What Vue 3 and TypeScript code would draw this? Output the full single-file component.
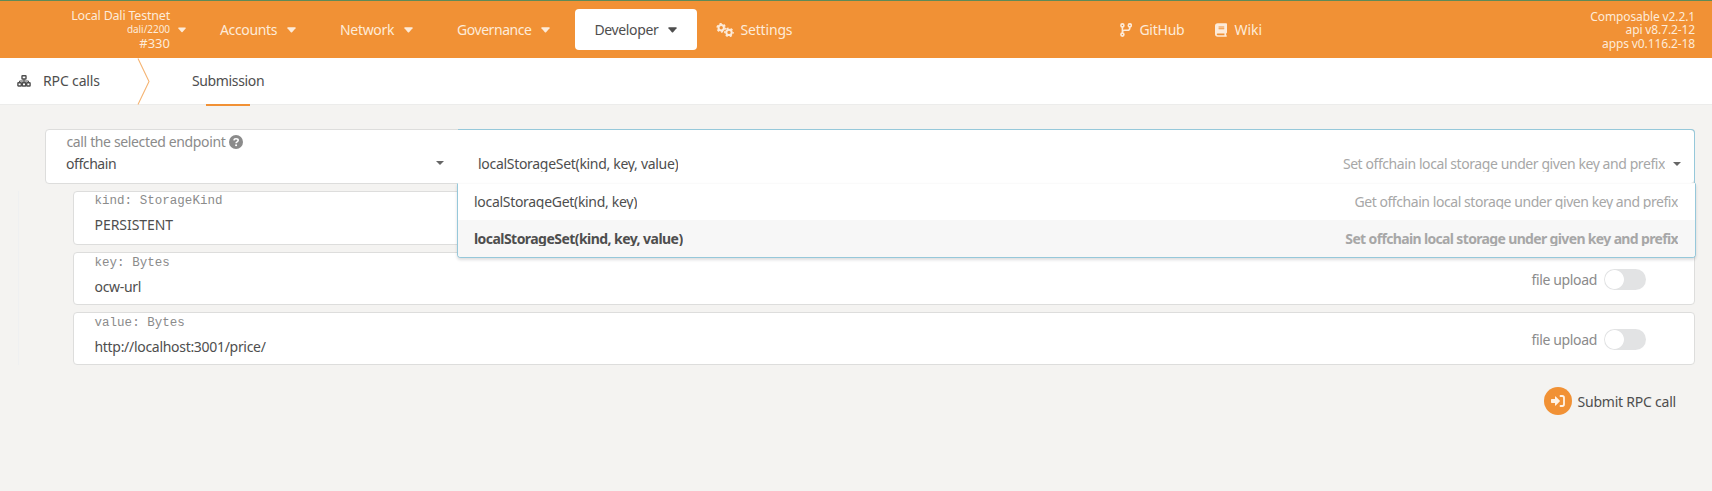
<script setup lang="ts">
interface NavItem { label: string; name: string; active?: boolean }
interface Option { label: string; hint: string; selected?: boolean }
interface Param { label: string; value: string; upload: boolean }

const nav: NavItem[] = [
  { label: 'Accounts', name: 'accounts' },
  { label: 'Network', name: 'network' },
  { label: 'Governance', name: 'governance' },
  { label: 'Developer', name: 'developer', active: true },
]
const options: Option[] = [
  { label: 'localStorageGet(kind, key)', hint: 'Get offchain local storage under given key and prefix' },
  { label: 'localStorageSet(kind, key, value)', hint: 'Set offchain local storage under given key and prefix', selected: true },
]
const params: Param[] = [
  { label: 'kind: StorageKind', value: 'PERSISTENT', upload: false },
  { label: 'key: Bytes', value: 'ocw-url', upload: true },
  { label: 'value: Bytes', value: 'http://localhost:3001/price/', upload: true },
]
</script>

<template>
  <div class="page">
    <header class="topbar">
      <div class="chain">
        <div class="chain-info">
          <div class="chain-name">Local Dali Testnet</div>
          <div class="chain-spec">dali/2200</div>
          <div class="chain-block">#330</div>
        </div>
        <svg class="caret small" viewBox="0 0 10 6"><path d="M1 0h8q1 0 .5 1L5.7 5.4q-.7.7-1.4 0L.5 1Q0 0 1 0z" /></svg>
      </div>
      <nav class="menu">
        <a v-for="n in nav" :key="n.name" class="nav-item" :class="[n.name, { active: n.active }]">
          <span>{{ n.label }}</span>
          <svg class="caret" viewBox="0 0 10 6"><path d="M1 0h8q1 0 .5 1L5.7 5.4q-.7.7-1.4 0L.5 1Q0 0 1 0z" /></svg>
        </a>
        <a class="nav-item settings">
          <svg class="gears" viewBox="0 0 18 14">
            <g fill="none" stroke="currentColor">
              <circle cx="5.2" cy="4.8" r="2.7" stroke-width="2" />
              <circle cx="5.2" cy="4.8" r="4.1" stroke-width="1.5" stroke-dasharray="2.15 2.15" />
              <circle cx="13" cy="9.4" r="2.7" stroke-width="2" />
              <circle cx="13" cy="9.4" r="4.1" stroke-width="1.5" stroke-dasharray="2.15 2.15" stroke-dashoffset="1" />
            </g>
          </svg>
          <span>Settings</span>
        </a>
      </nav>
      <a class="nav-item github">
        <svg class="branch" viewBox="0 0 12 14">
          <g fill="none" stroke="currentColor" stroke-width="1.6">
            <circle cx="2.4" cy="2.4" r="1.5" /><circle cx="2.4" cy="11.6" r="1.5" /><circle cx="9.8" cy="2.4" r="1.5" />
            <path d="M2.4 4v6M9.8 4v1q0 2.3-2.3 2.3H4.7Q2.4 7.3 2.4 9.3" />
          </g>
        </svg>
        <span>GitHub</span>
      </a>
      <a class="nav-item wiki">
        <svg class="book" viewBox="0 0 448 512"><path fill-rule="evenodd" d="M96 0C43 0 0 43 0 96v320c0 53 43 96 96 96h320c17.700 0 32-14.300 32-32s-14.300-32-32-32v-64c17.700 0 32-14.300 32-32V32c0-17.700-14.300-32-32-32H96zm0 384h256v64H96c-17.700 0-32-14.300-32-32s14.300-32 32-32zm32-240c0-8.800 7.200-16 16-16h192c8.800 0 16 7.200 16 16s-7.200 16-16 16H144c-8.800 0-16-7.200-16-16zm16 48h192c8.800 0 16 7.200 16 16s-7.200 16-16 16H144c-8.800 0-16-7.200-16-16s7.200-16 16-16z" /></svg>
        <span>Wiki</span>
      </a>
      <div class="versions">
        <div>Composable v2.2.1</div>
        <div>api v8.7.2-12</div>
        <div>apps v0.116.2-18</div>
      </div>
    </header>

    <div class="tabs">
      <div class="section">
        <svg class="sitemap" viewBox="0 0 14 12">
          <g fill="none" stroke="currentColor" stroke-width="1.4">
            <rect x="5" y=".8" width="4" height="3.200" rx=".5" />
            <rect x=".9" y="7.800" width="3.400" height="3.200" rx=".5" />
            <rect x="5.300" y="7.800" width="3.400" height="3.200" rx=".5" />
            <rect x="9.700" y="7.800" width="3.400" height="3.200" rx=".5" />
            <path d="M7 4v3.800M2.500 7.500V6h9v1.500" stroke-width="1" />
          </g>
        </svg>
        <span>RPC calls</span>
      </div>
      <svg class="chevron" viewBox="0 0 13 47"><path d="M1 .500 12 23.500 1 46.500" /></svg>
      <div class="tab"><span>Submission</span></div>
    </div>

    <main class="content">
      <section class="endpoint">
        <div class="group">
          <div class="label"><span>call the selected endpoint</span>
            <svg class="help" viewBox="0 0 14 14"><circle cx="7" cy="7" r="7" /><path d="M4.900 5.300Q5.100 3.700 7 3.700 9.200 3.700 9.200 5.300 9.200 6.300 8 6.900 7.100 7.300 7.100 8.200" /><circle class="dot" cx="7.100" cy="10.300" r="1.050" /></svg>
          </div>
          <div class="group-value">offchain</div>
          <svg class="arrow" viewBox="0 0 8 4"><path d="M0 0h8L4 4z" /></svg>
        </div>
        <div class="method">
          <span class="method-name">localStorageSet(kind, key, value)</span>
          <span class="hint">Set offchain local storage under given key and prefix</span>
          <svg class="arrow" viewBox="0 0 8 4"><path d="M0 0h8L4 4z" /></svg>
          <div class="dropdown">
            <div v-for="o in options" :key="o.label" class="option" :class="{ selected: o.selected }">
              <span class="method-name">{{ o.label }}</span>
              <span class="hint">{{ o.hint }}</span>
            </div>
          </div>
        </div>
      </section>

      <div class="params">
        <section v-for="p in params" :key="p.label" class="param">
          <div class="field">
            <div class="type">{{ p.label }}</div>
            <div class="value" :class="{ caps: p.value === 'PERSISTENT' }">{{ p.value }}</div>
          </div>
          <div v-if="p.upload" class="upload"><span>file upload</span><i class="toggle"></i></div>
        </section>
      </div>

      <div class="actions">
        <span class="submit-icon">
          <svg viewBox="0 0 14 12"><path class="solid" d="M0 4.700q0-.7.7-.7H4V1.800q0-.9.700-.3l4 3.900q.5.600 0 1.200l-4 3.900q-.7.600-.7-.3V8H.7Q0 8 0 7.300z" /><path class="line" d="M9.500 1h1.800Q13 1 13 2.700v6.600Q13 11 11.300 11H9.500" /></svg>
        </span>
        <span class="submit-text">Submit RPC call</span>
      </div>
    </main>
  </div>
</template>

<style>
body { margin: 0; background: #f4f3f1; }
</style>

<style scoped>
* { box-sizing: border-box; }
.page {
  height: 491px;
  overflow: hidden;
  background: #f4f3f1;
  color: #4e4e4e;
  font: 14px/20px "Noto Sans", sans-serif;
  letter-spacing: -0.36px;
  white-space: nowrap;
}
.topbar {
  display: flex;
  align-items: center;
  height: 58px;
  border-top: 1px solid #5f8a58;
  background: #f19135;
  color: #fdebd9;
}
.chain { display: flex; align-items: center; width: 201px; padding-left: 50px; }
.chain-info { width: 120px; text-align: right; font-size: 12.500px; line-height: 14px; letter-spacing: -0.2px; }
.chain-spec { font-size: 10px; line-height: 13px; letter-spacing: -0.05px; }
.chain-block { font-size: 13px; letter-spacing: 0; line-height: 15px; }
.caret { display: block; width: 9px; height: 6px; fill: currentColor; margin-left: 10px; }
.caret.small { width: 8px; height: 6px; margin-left: 8px; }
.menu { display: flex; align-items: center; }
.nav-item { display: flex; align-items: center; height: 41px; padding: 0 19px; }
.nav-item.network { margin-left: 6px; letter-spacing: -0.33px; }
.nav-item.governance { margin-left: 6px; letter-spacing: -0.46px; }
.nav-item.developer { margin-left: 6px; }
.nav-item.active { width: 122px; padding-left: 19px; border-radius: 4px; background: #fff; color: #4e4e4e; }
.nav-item.settings { padding-right: 0; letter-spacing: -0.16px; }
.gears { width: 18px; height: 14px; margin-right: 6px; }
.nav-item.github { margin-left: 328px; padding: 0; letter-spacing: -0.25px; }
.branch { width: 12px; height: 14px; margin-right: 7px; }
.nav-item.wiki { margin-left: 31px; padding: 0; letter-spacing: 0; }
.book { width: 12px; height: 14px; margin-right: 7px; fill: currentColor; }
.versions { margin-left: auto; margin-right: 17px; text-align: right; font-size: 12px; line-height: 13.500px; letter-spacing: -0.12px; padding-top: 1px; }

.tabs { display: flex; height: 47px; background: #fff; border-bottom: 1px solid #ececeb; }
.section { display: flex; align-items: center; width: 137px; padding: 0 0 0 17px; letter-spacing: -0.15px; }
.sitemap { width: 14px; height: 12px; margin-right: 12px; }
.chevron { width: 13px; height: 47px; fill: none; stroke: #f5b473; stroke-width: 1.100; }
.tab { display: flex; align-items: center; position: relative; margin-left: 42px; }
.tab::after { content: ""; position: absolute; left: 14px; top: 46px; width: 44px; height: 2px; background: #f19135; }

.content { padding: 24px 17px 0 45px; }
.endpoint { display: flex; height: 55px; border: 1px solid #dddddc; border-radius: 4px; background: #fff; }
.group { position: relative; width: 412px; padding: 2px 0 0 20px; }
.label { display: flex; align-items: center; height: 20px; padding-left: 0.500px; color: #8b8b8b; }
.help { width: 14px; height: 14px; margin-left: 4px; fill: #8b8b8b; }
.help path { fill: none; stroke: #fff; stroke-width: 1.600; }
.help .dot { fill: #fff; }
.group-value { height: 20px; margin-top: 2px; letter-spacing: -0.42px; }
.arrow { display: block; width: 8px; height: 4px; fill: #666; }
.group > .arrow { position: absolute; left: 390px; top: 31px; }
.method {
  position: relative;
  display: flex;
  align-items: flex-start;
  flex: 1;
  height: 55px;
  margin: -1px -1px 0 0;
  padding: 24px 13px 0 20px;
  border: 1px solid #96c8da;
  border-left: 0;
  border-bottom: 0;
  border-radius: 0 4px 0 0;
}
.method-name { letter-spacing: -0.3px; height: 18px; overflow: hidden; line-height: 20px; }
.hint { margin-left: auto; color: #a7a7a7; letter-spacing: -0.42px; height: 18px; overflow: hidden; line-height: 20px; }
.method > .arrow { margin: 8px 0 0 8px; }
.dropdown {
  position: absolute;
  z-index: 2;
  left: 0;
  right: -2px;
  top: 53px;
  margin-left: -1px;
  border: 1px solid #96c8da;
  border-top: 1px solid #fafafa;
  border-radius: 0 0 4px 4px;
  background: #fff;
  box-shadow: 0 2px 3px rgba(34, 36, 38, .15);
  overflow: hidden;
}
.option { display: flex; align-items: flex-start; height: 36px; padding: 8px 17px 0 16px; }
.option .method-name, .option .hint { height: 17px; }
.option .hint { letter-spacing: -0.44px; }
.option.selected { height: 37px; padding-top: 9px; background: #f7f7f7; font-weight: 700; }
.option.selected .method-name { letter-spacing: -0.55px; }
.option.selected .hint { letter-spacing: -0.65px; }

.params { display: flex; flex-direction: column; gap: 7px; margin: 7px 0 0 -27px; padding-left: 54px; border-left: 1px solid #eff0f1; }
.param { display: flex; height: 53px; border: 1px solid #dddddc; border-radius: 4px; background: #fff; }
.param:first-child { height: 54px; }
.field { padding: 3px 0 0 20.500px; }
.param:first-child .field { padding-top: 2px; }
.type { font: 12.500px/15px "Liberation Mono", monospace; letter-spacing: 0.030px; color: #8b8b8b; }
.value { margin-top: 6px; letter-spacing: -0.3px; }
.value.caps { letter-spacing: -0.05px; }
.upload { display: flex; align-items: center; margin: 0 48px 0 auto; padding-top: 2px; color: #8b8b8b; letter-spacing: -0.35px; }
.toggle { width: 42px; height: 21px; margin-left: 7px; border-radius: 11px; background: radial-gradient(circle at 10.500px 10.500px, #fff 9px, transparent 9.800px), #e2e3e4; }

.actions { display: flex; align-items: center; justify-content: flex-end; height: 28px; margin: 22px 19px 0 0; letter-spacing: -0.22px; }
.submit-icon { display: flex; align-items: center; justify-content: center; width: 28px; height: 28px; margin-right: 5px; border-radius: 50%; background: #f19135; }
.submit-icon svg { width: 14px; height: 12px; }
.submit-text { padding-top: 2px; }
.solid { fill: #fff2e5; }
.line { fill: none; stroke: #fff2e5; stroke-width: 1.800; stroke-linecap: round; }
</style>
